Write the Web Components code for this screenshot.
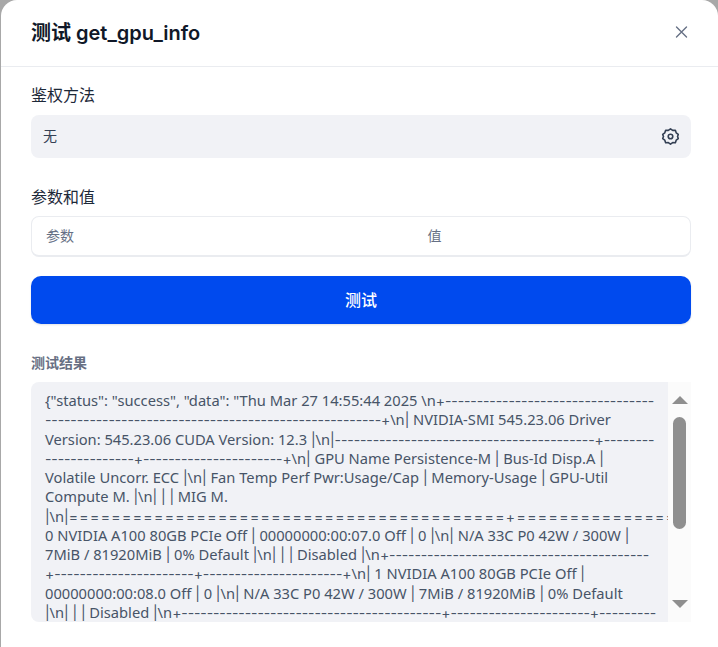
<!DOCTYPE html>
<html lang="zh">
<head>
<meta charset="utf-8">
<style>
  html, body { margin: 0; height: 100%; overflow: hidden; }
  body {
    background: #a8a8a8;
    font-family: Inter, "Noto Sans CJK SC", sans-serif;
    color: #1d2939;
  }
</style>
</head>
<body>
<test-dialog>
  <span slot="title">测试 get_gpu_info</span>
  <form-label>鉴权方法</form-label>
  <auth-select>无</auth-select>
  <form-label class="second">参数和值</form-label>
  <param-table></param-table>
  <run-button>测试</run-button>
  <result-panel></result-panel>
</test-dialog>

<script>
const d = (n) => "-".repeat(n);
const RESULT_LINES = [
  `{"status": "success", "data": "Thu Mar 27 14:55:44 2025 \\n+${d(33)}`,
  `${d(53)}+\\n| NVIDIA-SMI 545.23.06 Driver`,
  `Version: 545.23.06 CUDA Version: 12.3 |\\n|${d(41)}+${d(8)}`,
  `${d(14)}+${d(22)}+\\n| GPU Name Persistence-M | Bus-Id Disp.A |`,
  `Volatile Uncorr. ECC |\\n| Fan Temp Perf Pwr:Usage/Cap | Memory-Usage | GPU-Util`,
  `Compute M. |\\n| | | MIG M.`,
  `|\\n|${"=".repeat(41)}+${"=".repeat(16)}`,
  `0 NVIDIA A100 80GB PCIe Off | 00000000:00:07.0 Off | 0 |\\n| N/A 33C P0 42W / 300W |`,
  `7MiB / 81920MiB | 0% Default |\\n| | | Disabled |\\n+${d(41)}`,
  `+${d(22)}+${d(22)}+\\n| 1 NVIDIA A100 80GB PCIe Off |`,
  `00000000:00:08.0 Off | 0 |\\n| N/A 33C P0 42W / 300W | 7MiB / 81920MiB | 0% Default`,
  `|\\n| | | Disabled |\\n+${d(41)}+${d(22)}+${d(9)}`,
];

function define(name, css, html, setup) {
  customElements.define(name, class extends HTMLElement {
    constructor() {
      super();
      this.attachShadow({ mode: "open" }).innerHTML = `<style>${css}</style>${html}`;
      if (setup) setup(this.shadowRoot);
    }
  });
}

define("test-dialog", `
  :host {
    display: flex;
    flex-direction: column;
    box-sizing: border-box;
    height: 100vh;
    margin-left: 1px;
    background: #fff;
    border-radius: 16px 16px 0 0;
    overflow: hidden;
  }
  header {
    display: flex;
    align-items: center;
    justify-content: space-between;
    box-sizing: border-box;
    height: 67px;
    padding: 0 29px 4px 30px;
    border-bottom: 1px solid #eaecf0;
    font-size: 20px;
    font-weight: 600;
    color: #101828;
    flex: none;
  }
  svg { display: block; margin-top: 1px; }
  main { padding: 16px 27px 0 30px; }
`, `
  <header>
    <slot name="title"></slot>
    <svg width="16" height="16" viewBox="0 0 16 16" fill="none" stroke="#667085" stroke-width="1.4" stroke-linecap="round"><path d="M3.500 3l10 10M13.500 3l-10 10"/></svg>
  </header>
  <main><slot></slot></main>
`);

define("form-label", `
  :host {
    display: block;
    font-size: 16px;
    line-height: 24px;
    color: #1d2939;
    margin-bottom: 8px;
  }
  :host(.second) { margin-top: 27px; margin-bottom: 7px; }
`, `<slot></slot>`);

define("auth-select", `
  :host {
    display: flex;
    align-items: center;
    justify-content: space-between;
    box-sizing: border-box;
    height: 43px;
    padding: 0 12px 3px;
    background: #f1f2f6;
    border-radius: 8px;
    font-size: 14px;
    color: #344054;
  }
  svg { display: block; margin: 3px -1px 0 0; }
`, `
  <slot></slot>
  <svg width="19" height="19" viewBox="0 0 20 20" fill="none" stroke="#344054" stroke-width="1.7" stroke-linejoin="round">
    <circle cx="10" cy="10" r="2.4"/>
    <path d="M10 1.900l2.300 1.700 2.800-.2.900 2.700 2.200 1.700-.8 2.200.8 2.200-2.200 1.700-.9 2.700-2.800-.2L10 18.100l-2.300-1.700-2.800.2-.9-2.700-2.200-1.700.8-2.200-.8-2.200 2.200-1.700.9-2.700 2.800.2z"/>
  </svg>
`);

define("param-table", `
  :host {
    display: grid;
    grid-template-columns: 381.500px 1fr;
    box-sizing: border-box;
    height: 41px;
    padding-bottom: 2px;
    align-items: center;
    border: 1px solid #eaecf0;
    border-bottom-width: 2px;
    border-radius: 8px;
    font-size: 14px;
    color: #667085;
    margin-bottom: 19px;
  }
  span { padding-left: 14px; }
`, `<span>参数</span><span>值</span>`);

define("run-button", `
  :host {
    display: flex;
    align-items: center;
    justify-content: center;
    box-sizing: border-box;
    height: 48px;
    padding-bottom: 2px;
    background: #004aee;
    border-radius: 10px;
    box-shadow: 0 1px 2px rgba(16, 24, 40, .12);
    color: #fff;
    font-size: 16px;
    font-weight: 500;
    margin-bottom: 30px;
  }
`, `<slot></slot>`);

define("result-panel", `
  :host { display: block; }
  h3 {
    margin: 0 0 10px;
    font-size: 14px;
    line-height: 18px;
    font-weight: 600;
    color: #676f83;
  }
  .box { display: flex; height: 240px; }
  .text {
    flex: 1;
    min-width: 0;
    box-sizing: border-box;
    padding: 9px 14px 0;
    background: #f1f2f6;
    border-radius: 8px 0 0 8px;
    font-family: "Noto Sans", "Noto Sans CJK SC", sans-serif;
    font-size: 14.700px;
    line-height: 19.250px;
    color: #475467;
    white-space: nowrap;
    overflow: hidden;
  }
  .text div { height: 19.250px; }
  .rule { font-family: Inter, sans-serif; font-size: 14px; letter-spacing: -0.1px; }
  .rule.eq { letter-spacing: 1.400px; }
  .bar {
    flex: none;
    width: 23px;
    display: flex;
    flex-direction: column;
    align-items: center;
    background: #fbfbfb;
  }
  .thumb {
    width: 13px;
    height: 112px;
    margin-top: 13px;
    border-radius: 7px;
    background: #8f8f8f;
  }
  .spacer { flex: 1; }
  .arrow { display: block; flex: none; }
  .arrow.up { margin-top: 14px; }
  .arrow.down { margin-bottom: 14px; }
`, `
  <h3>测试结果</h3>
  <div class="box">
    <div class="text"></div>
    <div class="bar">
      <svg class="arrow up" width="16" height="8" viewBox="0 0 16 8"><path d="M8 0l8 8H0z" fill="#8f8f8f"/></svg>
      <div class="thumb"></div>
      <div class="spacer"></div>
      <svg class="arrow down" width="16" height="8" viewBox="0 0 16 8"><path d="M0 0h16L8 8z" fill="#8f8f8f"/></svg>
    </div>
  </div>
`, (root) => {
  const box = root.querySelector(".text");
  for (const line of RESULT_LINES) {
    const row = document.createElement("div");
    // rules and pipes are set apart: they need a narrower pipe and wider dashes
    for (const part of line.split(/([-=+]{2,}|\|)/)) {
      if (/^([-=+]{2,}|\|)$/.test(part)) {
        const rule = document.createElement("span");
        rule.className = part.includes("=") ? "rule eq" : "rule";
        rule.textContent = part;
        row.appendChild(rule);
      } else {
        row.appendChild(document.createTextNode(part));
      }
    }
    box.appendChild(row);
  }
});
</script>
</body>
</html>
